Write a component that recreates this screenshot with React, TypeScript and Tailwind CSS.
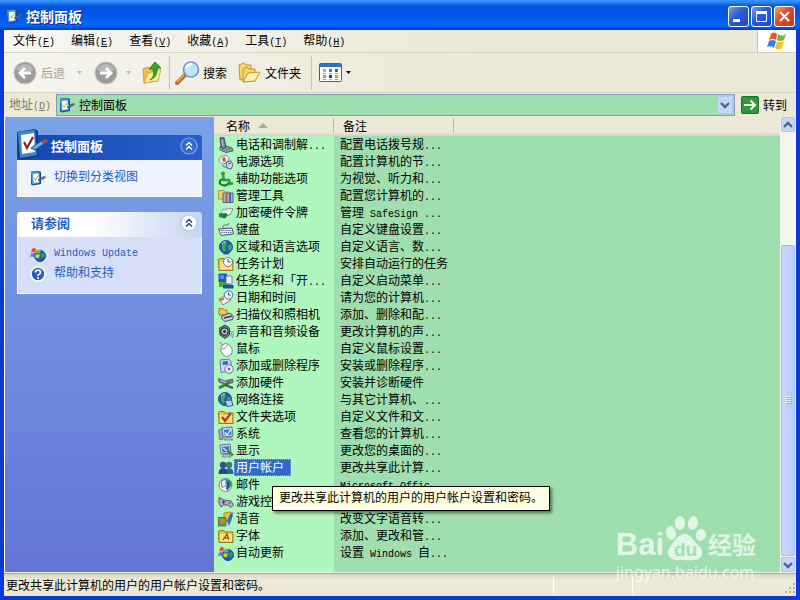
import React from "react";

/* Latin glyphs sit on a half-width grid next to full-width Chinese ones. */
function T({ children }: { children: string }) {
  const parts = children.split(/([\x20-\x7e]+)/).filter(Boolean);
  return (
    <>
      {parts.map((p, i) =>
        /^[\x20-\x7e]/.test(p) ? (
          <span key={i} className="whitespace-pre font-['Liberation_Mono',monospace] text-[10px]">
            {p}
          </span>
        ) : (
          <React.Fragment key={i}>{p}</React.Fragment>
        )
      )}
    </>
  );
}

function PanelIcon({ className }: { className: string }) {
  return (
    <svg viewBox="0 0 32 32" className={className} aria-hidden="true">
      <path d="M0 4 18 1 21 3 22 28 5 32 1 29Z" fill="#123d80" />
      <path d="M1 4 18 2 20 27 3 30Z" fill="#3c86d2" />
      <path d="M4 7 17 5 18 24 5 26Z" fill="#fff" />
      <path d="M7 14 10 20 16 9" fill="none" stroke="#8d1c1c" strokeWidth="2.200" />
      <path d="M14 20 24 13 27 16 18 22Z" fill="#5eaaf0" stroke="#1d4a86" strokeWidth="1" />
      <path d="M24 13 29 11 31 13 27 16Z" fill="#b94a2f" />
    </svg>
  );
}

function SmallPanelIcon() {
  return (
    <svg viewBox="0 0 16 16" className="size-4 shrink-0" aria-hidden="true">
      <path d="M1 1.500 9 1 11 2 11 14 3 15.500 1 14.500Z" fill="#1a4788" />
      <path d="M1 2 9.500 1.500 10 13 2 14.500Z" fill="#4f94d6" />
      <path d="M3 4 8.500 3.500 9 12 3.500 13Z" fill="#fff" />
      <path d="M4 8 5.500 10 8 6" fill="none" stroke="#d2b45a" strokeWidth="1.200" />
      <path d="M8 10 13 7 14 8.500 9 11Z" fill="#4c8fd8" stroke="#1d3f74" strokeWidth=".7" />
      <path d="M13 6.500 15 6 16 7.500 14 8.500Z" fill="#a1522f" />
    </svg>
  );
}

const Globe = () => (
  <>
    <circle cx="8" cy="8" r="6.500" fill="#1b5cc0" stroke="#0f3580" strokeWidth=".8" />
    <path d="M4 5 8 3 9 6 7 8 8 11 6 13 4 10Z M10 7 13 5 14 9 11 12Z" fill="#3fae43" />
    <path d="M4 5Q5 3 8 2.700" fill="none" stroke="#d5f0ff" />
  </>
);
const Folder = () => (
  <>
    <path d="M.5 3.500 2 2.500H6L7 4H15V14.500H1Z" fill="#f0bd3e" stroke="#96660f" strokeWidth=".9" />
    <path d="M2 6H14V13.500H2Z" fill="#fde28a" />
  </>
);
const Monitor = () => (
  <>
    <path d="M2 2 12 1 13 10 3 11Z" fill="#d0d8ec" stroke="#566288" strokeWidth=".9" />
    <path d="M4 4 11 3 11.500 8.500 4.500 9.500Z" fill="#2f78d8" />
    <path d="M6 11H11L13 14H4Z" fill="#b0bad0" stroke="#606c8a" strokeWidth=".7" />
  </>
);
const Flag = () => (
  <>
    <path d="M2 3Q4 1 6 3L5 7Q3 5 1 7Z" fill="#e5502a" />
    <path d="M7 3Q9 5 11 3L10 7Q8 8 6 7Z" fill="#6cba3a" />
    <path d="M1 8Q3 6 5 8L4 11Q2 10 0 11Z" fill="#4585de" />
    <path d="M6 8Q8 9 10 8L9 12Q7 13 5 11Z" fill="#f5bf2b" />
  </>
);

const icons: Record<string, React.ReactNode> = {
  phone: (
    <>
      <path d="M2 10 5 8 14 11 15 14 8 15.500 2 13Z" fill="#8e99aa" stroke="#414b5d" strokeWidth=".8" />
      <path d="M2 1 6 .5 8 10 5 12 3 9Z" fill="#76839a" stroke="#2b3445" strokeWidth=".8" />
      <path d="M4 3 5 9" stroke="#c8d0dc" />
      <path d="M8 12 12 12" stroke="#3aa53f" strokeWidth="1.500" />
    </>
  ),
  power: (
    <>
      <path d="M2 3 8 1 11 4 10 9 4 10 1 7Z" fill="#f1f1f4" stroke="#6f7690" strokeWidth=".8" />
      <path d="M4 4 7 3 8 7 5 8Z" fill="#d05a3a" />
      <path d="M8 8 13 7 15 11 13 15 9 14Z" fill="#d3d9ee" stroke="#4d5578" strokeWidth=".9" />
      <path d="M10 10 13 9" stroke="#4d5578" />
      <path d="M4 11Q5 14 9 13" fill="none" stroke="#5f6785" />
    </>
  ),
  access: (
    <>
      <circle cx="5" cy="2.500" r="2" fill="#2f9e3b" />
      <path d="M5 4 6 9 11 9 12 13 15 12" fill="none" stroke="#2f9e3b" strokeWidth="2.400" />
      <path d="M5 8Q0 10 2.500 13 7 16.500 11 12" fill="none" stroke="#1a7a2a" strokeWidth="2.100" />
    </>
  ),
  tools: (
    <>
      <path d="M.5 2.500H6L7 4H11V11H.5Z" fill="#f5cf67" stroke="#a98532" strokeWidth=".8" />
      <path d="M5 5H15V14.500H5Z" fill="#a9b7d3" stroke="#44527a" strokeWidth=".9" />
      <path d="M8.500 6V14" stroke="#d2602f" strokeWidth="2" />
      <path d="M12 5V14" stroke="#3a68b8" strokeWidth="2" />
    </>
  ),
  token: (
    <>
      <path d="M5 4.500 15 3.500 12 10 2 11Z" fill="#f5f8f6" stroke="#6a8272" strokeWidth=".8" />
      <path d="M1 8.500 8 8 10 10 7 13.500 1 12Z" fill="#237d3d" />
    </>
  ),
  keyboard: (
    <>
      <path d="M5 6Q4 3 8 3Q11 3 11 1" fill="none" stroke="#66708a" />
      <path d="M.5 7 14 6 15.500 12 3 13.500Z" fill="#e6eaf6" stroke="#47527a" strokeWidth="1" />
      <path d="M3 8.500H13M3.500 10.500H14" stroke="#55608c" strokeWidth="1.200" strokeDasharray="1.200 1" />
    </>
  ),
  globe: (
    <>
      <path d="M5 15.500H12L9.500 13H7Z" fill="#6e7a90" />
      <Globe />
    </>
  ),
  task: (
    <>
      <Folder />
      <circle cx="10" cy="6" r="4.500" fill="#fff" stroke="#6d7a96" />
      <path d="M10 3V6H12.500" fill="none" stroke="#333" strokeWidth=".9" />
    </>
  ),
  taskbar: (
    <>
      <path d="M.5 .5H9V9H.5Z" fill="#1e58c8" />
      <path d="M1 9H12V14H1Z" fill="#43a440" />
      <path d="M8 3H14V11H8Z" fill="#f0f4fb" stroke="#3a69ad" strokeWidth=".8" />
      <path d="M2 3H6M2 5H6" stroke="#8ec0f5" />
      <path d="M5 12H15.500V15.500H5Z" fill="#174cb0" />
    </>
  ),
  date: (
    <>
      <path d="M1 9 9 5 13 10 5 15Z" fill="#f0f1f8" stroke="#7d5d70" strokeWidth=".8" />
      <path d="M2 10.500 6 8.500" stroke="#d2523a" strokeWidth="1.700" />
      <circle cx="10.500" cy="5" r="4.300" fill="#dfeafa" stroke="#66749a" />
      <path d="M10.500 2.500V5H12.500" fill="none" stroke="#34405c" strokeWidth=".9" />
    </>
  ),
  scanner: (
    <>
      <path d="M1 1.500H5L6 3H9V8H1Z" fill="#f4c748" stroke="#96690f" strokeWidth=".8" />
      <path d="M3.500 9 12 6 15.500 9 14.500 12.500 7 14.500 4 12Z" fill="#c3c8d2" stroke="#414957" strokeWidth=".9" />
      <path d="M6 11 14 9" stroke="#39404f" strokeWidth="1.500" />
    </>
  ),
  sound: (
    <>
      <path d="M1.500 4 7 1 11.500 4 11.500 11 7 14.500 2 11Z" fill="#7c8088" stroke="#2c3038" strokeWidth=".9" />
      <circle cx="6.500" cy="7.500" r="3.700" fill="#c4c8cf" stroke="#24282f" strokeWidth="1.200" />
      <circle cx="6.500" cy="7.500" r="1.500" fill="#23272e" />
      <path d="M12.500 13Q14 10 13 7M14.500 14Q16 10 15 7" fill="none" stroke="#6a88c6" />
    </>
  ),
  mouse: (
    <>
      <path d="M2 1Q3 4 6 4" fill="none" stroke="#7c8394" />
      <ellipse cx="8.500" cy="9" rx="5.500" ry="6.500" transform="rotate(-25 8.500 9)" fill="#fbfbfc" stroke="#7f8595" strokeWidth=".9" />
      <path d="M3.500 8Q8 8 9.500 3.500" fill="none" stroke="#7f8595" strokeWidth=".9" />
    </>
  ),
  programs: (
    <>
      <path d="M2 2 11 1 13 4 13 13 3 14.500Z" fill="#cfdcf4" stroke="#4f67a4" strokeWidth=".9" />
      <path d="M4.500 3.500 10 3V6.500L4.500 7Z" fill="#3868c8" />
      <circle cx="11" cy="11" r="4.300" fill="#e2dffa" stroke="#6c70b4" strokeWidth=".9" />
      <circle cx="11" cy="11" r="1.200" fill="#5b60a4" />
    </>
  ),
  hardware: (
    <>
      <path d="M.5 3.500 7 6 14.500 4 15 7.500 8 9.500 1 7Z" fill="#7f8790" stroke="#3a4048" strokeWidth=".7" />
      <path d="M1 13 12 7" stroke="#37823f" strokeWidth="2.600" />
      <path d="M7 10 15 13" stroke="#4a525a" strokeWidth="2.200" />
      <path d="M3 5.500 8 7.500" stroke="#ccd2d8" />
    </>
  ),
  network: (
    <>
      <g transform="translate(-1 -1)"><Globe /></g>
      <path d="M7 8.500 13.500 8 15 13.500 9 14.500Z" fill="#a9d5fc" stroke="#334c82" strokeWidth=".9" />
    </>
  ),
  folderOptions: (
    <>
      <Folder />
      <path d="M4 8 7 12 13 4" fill="none" stroke="#c32c1d" strokeWidth="2.100" />
    </>
  ),
  system: (
    <>
      <path d="M.5 4 5 2V13L2 14Z" fill="#a0abc6" stroke="#535f80" strokeWidth=".8" />
      <g transform="translate(2 0)"><Monitor /></g>
      <path d="M7 6.500 9 9 13 3" fill="none" stroke="#fff" strokeWidth="1.300" />
    </>
  ),
  display: (
    <>
      <Monitor />
      <path d="M9 7.500 15 12.500" stroke="#3f8f33" strokeWidth="2.400" />
      <path d="M5 5 9 8" stroke="#e3f6b4" strokeWidth="1.300" />
    </>
  ),
  users: (
    <>
      <circle cx="11" cy="5" r="3.200" fill="#4d7480" />
      <path d="M7 14Q7 8 11 8 15.500 8 15.500 14Z" fill="#336a86" />
      <circle cx="5" cy="5" r="3.200" fill="#31508a" />
      <path d="M.5 14Q.5 8 5 8 9.500 8 9.500 14Z" fill="#234a90" />
    </>
  ),
  mail: (
    <>
      <circle cx="7.500" cy="8" r="6.500" fill="#fff" stroke="#6c7d9f" />
      <path d="M3 4 8 2 8 9 4 10.500Z" fill="#e3ecfb" stroke="#46699a" strokeWidth=".8" />
      <path d="M8 2Q15 3 13.500 9L9 14Z" fill="#2e8f79" />
      <path d="M9 5Q12 7 8.500 12" fill="none" stroke="#163f8a" strokeWidth="1.800" />
    </>
  ),
  game: (
    <>
      <path d="M1 3.500 6 6 13 7 15.500 11 13 13.500 10 11 5.500 11 3 13 1 9Z" fill="#b8b1c9" stroke="#4d4764" strokeWidth=".9" />
      <circle cx="11.500" cy="9" r="1.100" fill="#bf3e4e" />
      <path d="M4 8H7.500M5.700 6.500V10" stroke="#3a344e" />
    </>
  ),
  speech: (
    <>
      <path d="M6 2 13 1 14 6 10 10 6 8Z" fill="#f3c63f" stroke="#9d7920" strokeWidth=".8" />
      <path d="M9 10 12 3 15.500 1 13.500 9 11 15Z" fill="#3f6eae" />
      <path d="M.5 6.500H8V15H.5Z" fill="#59a84f" stroke="#2c6831" strokeWidth=".8" />
      <circle cx="4.500" cy="10.500" r="2.300" fill="#e57d2c" />
    </>
  ),
  fonts: (
    <>
      <Folder />
      <path d="M5 12 9 6 11 12M6 10H10.500" fill="none" stroke="#8a6a19" strokeWidth="1.400" />
    </>
  ),
  update: (
    <>
      <circle cx="10" cy="10" r="5.500" fill="#1d5cbc" stroke="#103677" strokeWidth=".8" />
      <path d="M10 8 14 7 15 10 12 13Z" fill="#37984a" />
      <Flag />
    </>
  ),
};

function SmallIcon({ name }: { name: string }) {
  return (
    <svg viewBox="0 0 16 16" className="size-4 shrink-0" aria-hidden="true">
      {icons[name]}
    </svg>
  );
}

const rows: [string, string, string][] = [
  ["phone", "电话和调制解...", "配置电话拨号规..."],
  ["power", "电源选项", "配置计算机的节..."],
  ["access", "辅助功能选项", "为视觉、听力和..."],
  ["tools", "管理工具", "配置您计算机的..."],
  ["token", "加密硬件令牌", "管理 SafeSign ..."],
  ["keyboard", "键盘", "自定义键盘设置..."],
  ["globe", "区域和语言选项", "自定义语言、数..."],
  ["task", "任务计划", "安排自动运行的任务"],
  ["taskbar", "任务栏和「开...", "自定义启动菜单..."],
  ["date", "日期和时间", "请为您的计算机..."],
  ["scanner", "扫描仪和照相机", "添加、删除和配..."],
  ["sound", "声音和音频设备", "更改计算机的声..."],
  ["mouse", "鼠标", "自定义鼠标设置..."],
  ["programs", "添加或删除程序", "安装或删除程序..."],
  ["hardware", "添加硬件", "安装并诊断硬件"],
  ["network", "网络连接", "与其它计算机、..."],
  ["folderOptions", "文件夹选项", "自定义文件和文..."],
  ["system", "系统", "查看您的计算机..."],
  ["display", "显示", "更改您的桌面的..."],
  ["users", "用户帐户", "更改共享此计算..."],
  ["mail", "邮件", "Microsoft Offic..."],
  ["game", "游戏控", ""],
  ["speech", "语音", "改变文字语音转..."],
  ["fonts", "字体", "添加、更改和管..."],
  ["update", "自动更新", "设置 Windows 自..."],
];

const menus: [string, string][] = [
  ["文件", "F"],
  ["编辑", "E"],
  ["查看", "V"],
  ["收藏", "A"],
  ["工具", "T"],
  ["帮助", "H"],
];

const hint = "更改共享此计算机的用户的用户帐户设置和密码。";

function Caret({ className }: { className: string }) {
  return (
    <svg viewBox="0 0 5 3" className={"h-[3px] w-[5px] " + className} aria-hidden="true">
      <path d="M0 0H5L2.500 3Z" fill="currentColor" />
    </svg>
  );
}

function Chevron({ up }: { up?: boolean }) {
  return (
    <svg viewBox="0 0 10 8" className="h-2 w-2.5" aria-hidden="true">
      <path d={up ? "M1 6 5 2 9 6" : "M1 2 5 6 9 2"} fill="none" stroke="#4d6185" strokeWidth="2.400" />
    </svg>
  );
}

function TitleBar() {
  return (
    <header className="flex h-[30px] items-center bg-[linear-gradient(#3d95ff_0%,#2a84f8_8%,#0353dc_20%,#0054e3_45%,#0061fb_72%,#0066ff_85%,#0052dd_93%,#003dbd_100%)] pt-0.5 pr-[5px] pl-1.5">
      <SmallPanelIcon />
      <h1 className="ml-1 flex-1 text-[14px] font-bold text-white [text-shadow:1px_1px_0_#0a2a80]">控制面板</h1>
      <div className="flex gap-0.5">
        <button aria-label="最小化" className="flex size-[21px] items-center justify-center rounded-[3px] border border-white bg-[linear-gradient(135deg,#7ba0f0,#2b5fdd_40%,#1c49c0)]">
          <svg viewBox="0 0 19 19" className="size-[19px]"><path d="M4 13.500H11" stroke="#fff" strokeWidth="3" /></svg>
        </button>
        <button aria-label="最大化" className="flex size-[21px] items-center justify-center rounded-[3px] border border-white bg-[linear-gradient(135deg,#7ba0f0,#2b5fdd_40%,#1c49c0)]">
          <svg viewBox="0 0 19 19" className="size-[19px]"><path d="M4.500 5V14.500H14.500V5" fill="none" stroke="#fff" /><path d="M4 5.500H15" stroke="#fff" strokeWidth="3" /></svg>
        </button>
        <button aria-label="关闭" className="flex size-[21px] items-center justify-center rounded-[3px] border border-white bg-[linear-gradient(135deg,#f0a088,#e0512d_40%,#c03a14)]">
          <svg viewBox="0 0 19 19" className="size-[19px]"><path d="M5 5 14 14M14 5 5 14" stroke="#fff" strokeWidth="2.200" /></svg>
        </button>
      </div>
    </header>
  );
}

function MenuBar() {
  return (
    <nav className="flex h-[23px] items-stretch border-b border-[#d5d1bd] bg-[linear-gradient(to_right,#f7f7f3,#ece9d8_60%)] pl-[9px]">
      <div className="flex flex-1 items-center gap-4">
        {menus.map(([label, key]) => (
          <button key={key} className="whitespace-nowrap">
            {label}
            <span className="font-['Liberation_Mono',monospace] text-[10px]">
              (<u>{key}</u>)
            </span>
          </button>
        ))}
      </div>
      <div className="flex w-[39px] items-center justify-center border-l border-[#c9c5b2] bg-white">
        <svg viewBox="0 0 20 20" className="size-5" aria-hidden="true">
          <path d="M4 3Q7 0 10 3L9 9Q6 7 2 9Z" fill="#e8562c" />
          <path d="M11 3Q15 6 19 3L17 9Q13 11 10 9Z" fill="#79b83c" />
          <path d="M2 10Q5 8 9 10L7 17Q4 14 0 16Z" fill="#3f7fd8" />
          <path d="M10 10Q13 12 17 10L15 17Q11 20 8 17Z" fill="#f7bf31" />
        </svg>
      </div>
    </nav>
  );
}

function RoundArrow({ flip }: { flip?: boolean }) {
  return (
    <svg viewBox="0 0 24 24" className="size-6 shrink-0" aria-hidden="true">
      <circle cx="12" cy="12" r="11" fill="#9c9c9a" stroke="#c5c4bd" />
      <path d="M3 9A10 10 0 0 1 21 9Q12 12 3 9Z" fill="#b9b9b7" />
      <path d={flip ? "M6 12H17M12 7 17 12 12 17" : "M18 12H7M12 7 7 12 12 17"} fill="none" stroke="#fff" strokeWidth="2.800" />
    </svg>
  );
}

function ToolBar() {
  return (
    <div className="flex h-10 items-center border-b border-[#d5d1bd] bg-[linear-gradient(to_right,#f5f4ee,#ece9d8_60%)] pl-[9px]">
      <button disabled className="flex items-center gap-1 text-[#a5a397]">
        <RoundArrow />
        后退
        <Caret className="ml-2 text-[#b9b6a6]" />
      </button>
      <button disabled aria-label="前进" className="ml-3 flex items-center gap-2">
        <RoundArrow flip />
        <Caret className="text-[#b9b6a6]" />
      </button>
      <button aria-label="向上" className="ml-2.5">
        <svg viewBox="0 0 22 24" className="h-6 w-[22px]">
          <path d="M2 8 7 6 9 8 16 6V20L3 22Z" fill="#f0c24b" stroke="#c3922c" strokeWidth=".8" />
          <path d="M3 22 7 12 20 8 17 20Z" fill="#fdeb9b" stroke="#c9982f" strokeWidth=".8" />
          <path d="M9 19Q14 16 12 8L8 8 14 1 20 7 16 7Q17 16 9 19Z" fill="#36a92b" stroke="#1b7716" strokeWidth=".8" />
        </svg>
      </button>
      <div className="mr-1 ml-1.5 h-[34px] w-px bg-[#c8c4b0]" />
      <button className="flex items-center gap-[3px]">
        <svg viewBox="0 0 26 26" className="size-[26px]" aria-hidden="true">
          <path d="M3 23 11 15" stroke="#b96a2d" strokeWidth="4" strokeLinecap="round" />
          <path d="M3 22 10 15" stroke="#f0b070" strokeWidth="1.500" />
          <circle cx="17" cy="9.500" r="7.500" fill="#bfe4fb" stroke="#7493ca" strokeWidth="1.600" />
          <path d="M12 8Q14 4 18 4" fill="none" stroke="#fff" strokeWidth="2.500" />
        </svg>
        搜索
      </button>
      <button className="ml-2.5 flex items-center gap-1">
        <svg viewBox="0 0 24 22" className="h-[22px] w-6" aria-hidden="true">
          <path d="M2 3 7 1 9 3H14V16L3 18Z" fill="#f7d870" stroke="#c2922e" />
          <path d="M6 7 10 5 12 7H18V19L6 20Z" fill="#f7d870" stroke="#c2922e" />
          <path d="M6 20 11 11 23 10 18 19Z" fill="#fef0ad" stroke="#c2922e" />
        </svg>
        文件夹
      </button>
      <div className="mr-[7px] ml-2.5 h-[34px] w-px bg-[#c8c4b0]" />
      <button aria-label="查看" className="flex items-center gap-[3px]">
        <svg viewBox="0 0 24 20" className="h-5 w-6">
          <rect x=".5" y=".5" width="22" height="18" rx="1" fill="#fff" stroke="#2565b5" />
          <path d="M1 1H22V4H1Z" fill="#2c72c9" />
          <path d="M4 6h3v3H4Z" fill="#a3aac9" /><path d="M10 6h3v3h-3Z" fill="#3480d8" /><path d="M16 6h3v3h-3Z" fill="#178d2b" />
          <path d="M4 12h3v3H4Z" fill="#e27a4c" /><path d="M10 12h3v3h-3Z" fill="#133f96" /><path d="M16 12h3v3h-3Z" fill="#cda91e" />
          <path d="M4 10.500H19M4 16.500H19" stroke="#9ba3af" strokeDasharray="3 3" />
        </svg>
        <Caret className="text-black" />
      </button>
    </div>
  );
}

function AddressBar() {
  return (
    <div className="flex h-6 items-center bg-[#ece9d8] pr-[9px] pl-[5px]">
      <label htmlFor="address" className="w-[47px] whitespace-nowrap text-[#7d7b70]">
        地址
        <span className="font-['Liberation_Mono',monospace] text-[10px]">(<u>D</u>)</span>
      </label>
      <div className="flex h-[22px] flex-1 items-center border border-[#7f9db9] bg-[#9fdfaf] p-px pl-0.5">
        <SmallPanelIcon />
        <input id="address" defaultValue="控制面板" className="ml-1 h-4 min-w-0 flex-1 bg-transparent outline-none" />
        <button aria-label="展开地址列表" className="flex h-[18px] w-4 items-center justify-center rounded-xs border border-[#b4c6f4] bg-[#c5d5fc]">
          <Chevron />
        </button>
      </div>
      <button className="ml-1.5 flex items-center gap-1">
        <svg viewBox="0 0 18 18" className="size-[18px]" aria-hidden="true">
          <rect x=".5" y=".5" width="17" height="17" rx="1.500" fill="#2c9a36" stroke="#1c6f27" />
          <path d="M3 9H14M9.500 4.500 14 9 9.500 13.500" fill="none" stroke="#fff" strokeWidth="2" />
        </svg>
        转到
      </button>
    </div>
  );
}

function Collapse({ dark }: { dark?: boolean }) {
  return (
    <button aria-label="折叠" className="mr-1 mb-1">
      <svg viewBox="0 0 18 18" className="size-[18px]">
        <circle cx="9" cy="9" r="8" fill={dark ? "#3668c6" : "#fff"} stroke={dark ? "#86a8e6" : "#b8c4dd"} strokeWidth="1.200" />
        <path d="M6 8.500 9 5.500 12 8.500M6 12.500 9 9.500 12 12.500" fill="none" stroke={dark ? "#fff" : "#1f3f86"} strokeWidth="1.500" />
      </svg>
    </button>
  );
}

function Sidebar() {
  return (
    <aside className="w-[210px] shrink-0 border-l border-white bg-[linear-gradient(#7ba2e7,#6375d6)] px-3 pt-[18px] text-[#215dc6]">
      <section>
        <div className="flex h-[25px] items-center rounded-t-[3px] bg-[linear-gradient(to_right,#1149b4,#2a5fcb)] text-white">
          <PanelIcon className="-mt-2 size-8 shrink-0" />
          <h2 className="mb-1 ml-0.5 flex-1 text-[13px] font-bold">控制面板</h2>
          <Collapse dark />
        </div>
        <div className="h-[37px] border border-t-0 border-white bg-[#eff3ff] pt-2 pl-3">
          <a href="#category" className="flex items-center gap-2">
            <SmallPanelIcon />
            <span className="mb-1">切换到分类视图</span>
          </a>
        </div>
      </section>
      <section className="mt-[15px]">
        <div className="flex h-[25px] items-center rounded-t-[3px] bg-[linear-gradient(to_right,#fff_40%,#c6d3f7)] pl-3.5">
          <h2 className="mb-1 flex-1 text-[13px] font-bold">请参阅</h2>
          <Collapse />
        </div>
        <div className="flex h-[57px] flex-col gap-0.5 border border-t-0 border-white bg-[#d6dff7] pt-2 pl-3">
          <a href="#update" className="flex h-[18px] items-center gap-2">
            <SmallIcon name="update" />
            <span className="mb-1"><T>Windows Update</T></span>
          </a>
          <a href="#help" className="flex h-[18px] items-center gap-2">
            <svg viewBox="0 0 16 16" className="size-4" aria-hidden="true">
              <circle cx="8" cy="8" r="7" fill="#2b5fbe" stroke="#fff" strokeWidth="1.500" />
              <path d="M5.500 6.500Q5.500 4 8 4T10.500 6.500Q10.500 8 8 9V10" fill="none" stroke="#fff" strokeWidth="1.700" />
              <path d="M7.200 11.300H9V13H7.200Z" fill="#fff" />
            </svg>
            <span className="mb-1">帮助和支持</span>
          </a>
        </div>
      </section>
    </aside>
  );
}

function FileList() {
  return (
    <div className="min-w-0 flex-1 bg-[linear-gradient(to_right,#aff7bf_120px,#9fdfaf_120px)]">
      <table className="w-full table-fixed border-collapse text-left leading-[15px]">
        <colgroup>
          <col className="w-[120px]" />
          <col className="w-[120px]" />
          <col />
        </colgroup>
        <thead>
          <tr className="h-[19px] bg-[linear-gradient(#ece9d8_80%,#d6d2c2)]">
            <th scope="col" className="p-0 pb-0.5 pl-3 font-normal">
              <div className="flex items-center gap-2 border-r border-[#bdb9a6]">
                名称
                <svg viewBox="0 0 10 5" className="h-[5px] w-2.5" aria-hidden="true"><path d="M0 5 5 0 10 5Z" fill="#aca899" /></svg>
              </div>
            </th>
            <th scope="col" className="p-0 pb-0.5 pl-[9px] font-normal">
              <div className="border-r border-[#bdb9a6]">备注</div>
            </th>
            <td />
          </tr>
        </thead>
        <tbody>
          {rows.map(([icon, name, note]) => {
            const selected = icon === "users";
            return (
              <tr key={icon} className="h-[17px]">
                <td className="relative p-0 pl-1 whitespace-nowrap">
                  <div className="flex h-[17px] items-center">
                    <SmallIcon name={icon} />
                    <span className={selected ? "h-[17px] border border-dotted border-[#d8a25a] bg-[#316ac5] pr-1.5 pl-px leading-[13px] text-white" : "h-[17px] pl-0.5"}>
                      <T>{name}</T>
                    </span>
                  </div>
                  {selected && (
                    <div role="tooltip" className="absolute top-[27px] left-[58px] z-10 border border-black bg-[#ffffe1] px-1.5 pt-0.5 pb-1.5 text-black shadow-[2px_2px_3px_rgba(0,0,0,0.5)]">
                      {hint}
                    </div>
                  )}
                </td>
                <td className="h-[17px] p-0 pl-1.5 whitespace-nowrap">
                  <div className="h-[17px]"><T>{note}</T></div>
                </td>
                <td />
              </tr>
            );
          })}
        </tbody>
      </table>
    </div>
  );
}

function ScrollBar() {
  return (
    <div className="flex w-4 shrink-0 flex-col items-center bg-[#f6f5ef]">
      <button aria-label="向上滚动" className="flex h-[15px] w-3.5 shrink-0 items-center justify-center rounded-xs border border-[#adc1f2] bg-[#c5d5fc]">
        <Chevron up />
      </button>
      <div className="flex-[114]" />
      <div className="flex w-3.5 flex-[312] items-center justify-center rounded-xs border border-[#a5bbf3] bg-[linear-gradient(to_right,#c9d8fc,#b9cbf9)]">
        <svg viewBox="0 0 7 8" className="h-2 w-[7px]" aria-hidden="true">
          <path d="M0 .5H6M0 2.500H6M0 4.500H6M0 6.500H6" stroke="#eef4fe" />
          <path d="M1 1.500H7M1 3.500H7M1 5.500H7M1 7.500H7" stroke="#8cb0f8" />
        </svg>
      </div>
      <button aria-label="向下滚动" className="mt-px flex h-[15px] w-3.5 shrink-0 items-center justify-center rounded-xs border border-[#adc1f2] bg-[#c5d5fc]">
        <Chevron />
      </button>
    </div>
  );
}

function Watermark() {
  return (
    <div className="pointer-events-none absolute right-11 bottom-[17px] z-20 text-white/70">
      <div className="flex h-[47px] items-end">
        <span className="font-['Liberation_Sans',sans-serif] text-[31px] leading-[33px] font-bold">Bai</span>
        <svg viewBox="0 0 42 46" className="h-[46px] w-[42px]" aria-hidden="true">
          <g fill="currentColor">
            <ellipse cx="7" cy="18" rx="5" ry="7" transform="rotate(-12 7 18)" />
            <ellipse cx="16" cy="8" rx="5" ry="7" />
            <ellipse cx="29" cy="8" rx="5" ry="7" transform="rotate(12 29 8)" />
            <ellipse cx="37" cy="20" rx="5" ry="6" transform="rotate(15 37 20)" />
            <path d="M21 19C27 19 29 26 34 30 41 35 39 44 31 45 25 46 18 45 13 45 5 45 1 38 6 32 10 27 14 19 21 19Z" />
          </g>
          <text x="10" y="41" className="fill-[#9fdfaf] font-['Liberation_Sans',sans-serif] text-[19px] font-bold">du</text>
        </svg>
        <span className="ml-0.5 text-[24px] leading-[34px] font-bold">经验</span>
      </div>
      <div className="font-['Noto_Sans',sans-serif] text-[16px] leading-[22px]">jingyan.baidu.com</div>
    </div>
  );
}

function StatusBar() {
  return (
    <footer className="flex h-[23px] items-stretch border-t border-[#aca899] bg-[linear-gradient(#d8d5c5,#ece9d8_25%,#ece9d8)]">
      <p className="flex flex-1 items-center pl-0.5">{hint}</p>
      <div className="my-0.5 w-[79px] border-l border-[#fffdf5]" />
      <div className="my-0.5 flex w-[164px] items-end justify-end border-l border-[#fffdf5]">
        <svg viewBox="0 0 12 12" className="size-3" aria-hidden="true">
          <path d="M9 1h2v2H9ZM9 5h2v2H9ZM9 9h2v2H9ZM5 5h2v2H5ZM5 9h2v2H5ZM1 9h2v2H1Z" fill="#b4b09d" />
        </svg>
      </div>
    </footer>
  );
}

export default function App() {
  return (
    <div className="relative flex min-h-screen flex-col bg-[#0831d9] font-['Noto_Sans_CJK_SC',sans-serif] text-[12px] leading-4 text-black">
      <TitleBar />
      <div className="flex flex-1 flex-col border-4 border-t-0 border-[#0a39d6]">
        <MenuBar />
        <ToolBar />
        <AddressBar />
        <main className="flex flex-1 border-b border-[#f5f3e8]">
          <Sidebar />
          <FileList />
          <ScrollBar />
        </main>
        <StatusBar />
      </div>
      <Watermark />
    </div>
  );
}
